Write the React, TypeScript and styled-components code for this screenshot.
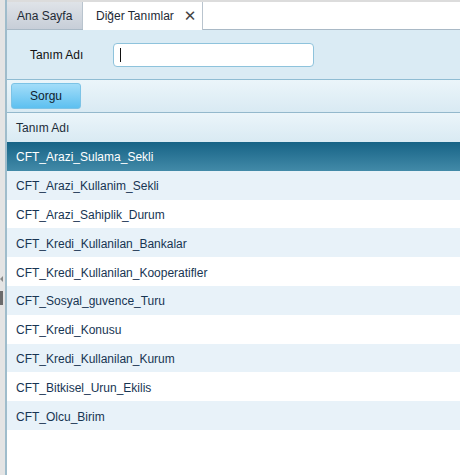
import React from "react";
import styled, { createGlobalStyle } from "styled-components";

const GlobalStyle = createGlobalStyle`
  html, body {
    margin: 0;
    padding: 0;
    background: #ffffff;
    font-family: "Liberation Sans", Arial, sans-serif;
  }
`;

const Page = styled.div`
  display: flex;
  width: 460px;
  height: 475px;
  overflow: hidden;
`;

const SideStrip = styled.div`
  position: relative;
  width: 5px;
  background: #e4e4e4;
  border-right: 2px solid #9fbccb;
  flex-shrink: 0;
`;

const SideHandle = styled.div`
  position: absolute;
  left: 0;
  top: 291px;
  width: 3px;
  height: 14px;
  background: #6b6b6b;
`;

const SideArrow = styled.div`
  position: absolute;
  left: 0;
  top: 276px;
  width: 0;
  height: 0;
  border-top: 3px solid transparent;
  border-bottom: 3px solid transparent;
  border-right: 3px solid #888;
`;

const Main = styled.div`
  flex: 1;
  display: flex;
  flex-direction: column;
  min-width: 0;
`;

const TabBar = styled.div`
  display: flex;
  align-items: flex-end;
  height: 30px;
  box-sizing: border-box;
  border-top: 2px solid #dcdcdc;
  border-bottom: 1px solid #a9b9c6;
  background: #ffffff;
`;

const Tab = styled.div<{ $active?: boolean; $width: number }>`
  display: flex;
  align-items: center;
  gap: 10px;
  flex-shrink: 0;
  white-space: nowrap;
  width: ${(p) => p.$width}px;
  padding-left: ${(p) => (p.$active ? "13px" : "10px")};
  box-sizing: border-box;
  font-size: 12px;
  color: #1e2a36;
  background: ${(p) =>
    p.$active ? "#ffffff" : "linear-gradient(#dfe3e8, #c7ced8)"};
  border-right: 1px solid #b9c4ce;
  margin-bottom: ${(p) => (p.$active ? "-1px" : "0")};
  height: ${(p) => (p.$active ? "28px" : "27px")};
`;

const TabText = styled.span`
  flex-shrink: 0;
`;

const CloseX = styled.span`
  flex-shrink: 0;
  font-family: "DejaVu Sans", sans-serif;
  font-size: 15px;
  color: #444;
  line-height: 1;
`;

const FormPanel = styled.div`
  display: flex;
  align-items: center;
  height: 49px;
  background: #daebf4;
  padding-left: 23px;
  border-bottom: 1px solid #8fbcd3;
`;

const Label = styled.label`
  font-size: 12px;
  color: #111;
  width: 83px;
`;

const TextInput = styled.div`
  display: flex;
  align-items: center;
  width: 201px;
  height: 24px;
  box-sizing: border-box;
  background: #ffffff;
  border: 1px solid #8ec3dc;
  border-radius: 4px;
  padding-left: 6px;
`;

const Caret = styled.span`
  width: 1px;
  height: 14px;
  background: #111;
`;

const Toolbar = styled.div`
  display: flex;
  align-items: center;
  height: 32px;
  padding-left: 4px;
  background: linear-gradient(#ebf5fa, #d9eaf3);
  border-bottom: 1px solid #93b8cc;
`;

const QueryButton = styled.button`
  width: 70px;
  height: 26px;
  border: 1px solid #7cc3e6;
  border-radius: 3px;
  background: linear-gradient(#a3ddf9, #5dc0f0);
  font-family: "Liberation Sans", Arial, sans-serif;
  font-size: 12px;
  color: #10222e;
  padding: 0;
`;

const Grid = styled.div`
  display: flex;
  flex-direction: column;
`;

const HeaderRow = styled.div`
  display: flex;
  align-items: center;
  height: 29px;
  padding-left: 9px;
  font-size: 12px;
  color: #1c2c3a;
  background: linear-gradient(#ebf5fa, #d9eaf3);
`;

const Row = styled.div<{ $selected?: boolean; $alt?: boolean }>`
  display: flex;
  align-items: center;
  height: 28.8px;
  box-sizing: border-box;
  padding: 2px 0 0 9px;
  font-size: 12px;
  color: ${(p) => (p.$selected ? "#ffffff" : "#173553")};
  background: ${(p) =>
    p.$selected
      ? "linear-gradient(#176386, #428aa8)"
      : p.$alt
      ? "#e8f2f9"
      : "#ffffff"};
`;

const items = [
  "CFT_Arazi_Sulama_Sekli",
  "CFT_Arazi_Kullanim_Sekli",
  "CFT_Arazi_Sahiplik_Durum",
  "CFT_Kredi_Kullanilan_Bankalar",
  "CFT_Kredi_Kullanilan_Kooperatifler",
  "CFT_Sosyal_guvence_Turu",
  "CFT_Kredi_Konusu",
  "CFT_Kredi_Kullanilan_Kurum",
  "CFT_Bitkisel_Urun_Ekilis",
  "CFT_Olcu_Birim",
];

export default function App() {
  return (
    <>
      <GlobalStyle />
      <Page>
        <SideStrip>
          <SideArrow />
          <SideHandle />
        </SideStrip>
        <Main>
          <TabBar>
            <Tab $width={76}>
              <TabText>Ana Sayfa</TabText>
            </Tab>
            <Tab $active $width={120}>
              <TabText>Diğer Tanımlar</TabText>
              <CloseX>✕</CloseX>
            </Tab>
          </TabBar>
          <FormPanel>
            <Label>Tanım Adı</Label>
            <TextInput>
              <Caret />
            </TextInput>
          </FormPanel>
          <Toolbar>
            <QueryButton>Sorgu</QueryButton>
          </Toolbar>
          <Grid>
            <HeaderRow>Tanım Adı</HeaderRow>
            {items.map((name, i) => (
              <Row key={name} $selected={i === 0} $alt={i % 2 === 1}>
                {name}
              </Row>
            ))}
          </Grid>
        </Main>
      </Page>
    </>
  );
}
